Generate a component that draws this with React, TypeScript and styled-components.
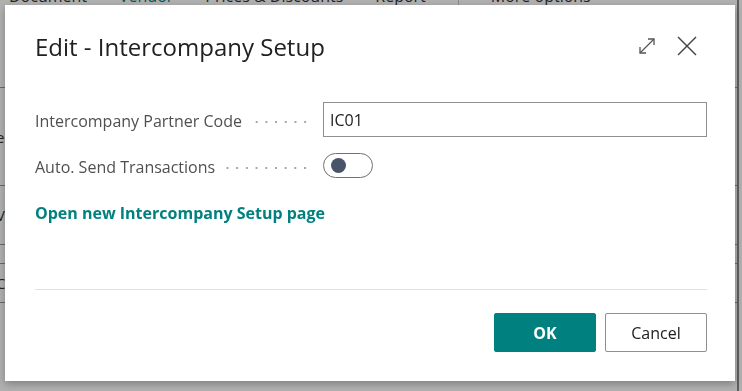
import styled, { createGlobalStyle } from 'styled-components';

const GlobalStyle = createGlobalStyle`
	html, body {
		margin: 0;
		padding: 0;
		width: 742px;
		height: 391px;
		overflow: hidden;
		background: #fff;
		font-family: 'Open Sans', 'Noto Sans', sans-serif;
	}
`;

// page behind the dialog (mostly hidden)
const Page = styled.div`
	width: 739px;
	height: 391px;
	display: flex;
	flex-direction: column;
	border-right: 2px solid #8a8a8a;
	box-sizing: border-box;
`;

const ActionBar = styled.div`
	display: flex;
	align-items: center;
	gap: 32px;
	height: 24px;
	margin-top: -16px;
	padding-left: 9px;
	font-size: 16px;
	white-space: nowrap;
`;

const ActionItem = styled.span<{ $accent?: boolean }>`
	color: ${(p) => (p.$accent ? '#00807f' : '#333')};
`;

const ActionSep = styled.span`
	width: 1px;
	height: 22px;
	background: #c8c8c8;
`;

const BgRow = styled.div<{ $h: number }>`
	height: ${(p) => p.$h}px;
	border-bottom: 1px solid #999;
	display: flex;
	align-items: center;
	font-size: 15px;
	color: #333;
	margin-left: -4px;
`;

const Overlay = styled.div`
	position: fixed;
	inset: 0;
	background: rgba(0, 0, 0, 0.31);
	display: flex;
	align-items: flex-start;
	padding: 5px 0 0 5px;
`;

const Dialog = styled.div`
	width: 730px;
	height: 376px;
	background: #fff;
	box-shadow: 0 3px 8px rgba(0, 0, 0, 0.28);
	display: flex;
	flex-direction: column;
	padding: 0 28px 0 30px;
	box-sizing: border-box;
`;

const Header = styled.div`
	display: flex;
	align-items: center;
	justify-content: space-between;
	padding-top: 26px;
`;

const Title = styled.h1`
	margin: 0;
	font-size: 24px;
	line-height: 32px;
	font-weight: 400;
	color: #212121;
`;

const HeaderIcons = styled.div`
	display: flex;
	align-items: center;
	gap: 20px;
	margin-right: 10px;
	margin-top: -2px;
`;

const IconButton = styled.button`
	border: none;
	background: transparent;
	padding: 0;
	width: 20px;
	height: 20px;
	display: flex;
	align-items: center;
	justify-content: center;
	cursor: pointer;
`;

const Body = styled.div`
	flex: 1;
	display: flex;
	flex-direction: column;
	padding-top: 39px;
`;

const FieldRow = styled.div`
	display: grid;
	grid-template-columns: 288px 1fr;
	height: 35px;
	align-items: center;
	margin-bottom: 11px;
`;

const LabelCell = styled.div`
	display: flex;
	align-items: center;
	padding-right: 13px;
	padding-top: 2px;
`;

const Label = styled.span`
	font-size: 16px;
	color: #505050;
	white-space: nowrap;
`;

const Leader = styled.span`
	flex: 1;
	height: 4px;
	margin-left: 8px;
	margin-top: 3px;
	background-image: radial-gradient(circle, #a6a6a6 0.9px, transparent 1.2px);
	background-size: 9.7px 4px;
	background-position: right center;
	background-repeat: repeat-x;
`;

const TextInput = styled.input`
	height: 35px;
	box-sizing: border-box;
	border: 1px solid #8f8f8f;
	border-radius: 0;
	padding: 0 6px;
	font-family: inherit;
	font-size: 16px;
	color: #212121;
	outline: none;
`;

const Toggle = styled.button<{ $on: boolean }>`
	width: 50px;
	height: 25px;
	box-sizing: border-box;
	border: 1px solid #717171;
	border-radius: 13px;
	background: #fff;
	padding: 0 5px;
	display: flex;
	align-items: center;
	justify-content: ${(p) => (p.$on ? 'flex-end' : 'flex-start')};
	cursor: pointer;
`;

const Knob = styled.span`
	width: 15px;
	height: 15px;
	border-radius: 50%;
	background: #4a5468;
	margin-left: 2px;
`;

const Link = styled.a`
	font-size: 16px;
	line-height: 24px;
	font-weight: 700;
	color: #00807f;
	text-decoration: none;
	margin-top: 7px;
	cursor: pointer;
`;

const Divider = styled.div`
	height: 1px;
	background: #e1e1e1;
`;

const Footer = styled.div`
	display: flex;
	justify-content: flex-end;
	gap: 9px;
	padding: 23px 0 29px;
`;

const Button = styled.button<{ $primary?: boolean }>`
	min-width: 102px;
	height: 39px;
	box-sizing: border-box;
	border-radius: 2px;
	border: 1px solid ${(p) => (p.$primary ? '#00807f' : '#8f8f8f')};
	background: ${(p) => (p.$primary ? '#00807f' : '#fff')};
	color: ${(p) => (p.$primary ? '#fff' : '#212121')};
	font-family: inherit;
	font-size: 16px;
	font-weight: ${(p) => (p.$primary ? 700 : 400)};
	cursor: pointer;
`;

const ExpandIcon = () => (
	<svg width="20" height="20" viewBox="0 0 20 20" fill="none" stroke="#555" strokeWidth="1.3">
		<path d="M3 17L17 3" />
		<path d="M11 3H17V9" />
		<path d="M3 11V17H9" />
	</svg>
);

const CloseIcon = () => (
	<svg width="20" height="20" viewBox="0 0 20 20" fill="none" stroke="#444" strokeWidth="1.5">
		<path d="M1 1L19 19" />
		<path d="M19 1L1 19" />
	</svg>
);

export default function App() {
	return (
		<>
			<GlobalStyle />
			<Page>
				<ActionBar>
					<ActionItem>Document</ActionItem>
					<ActionItem $accent>Vendor</ActionItem>
					<ActionItem>Prices &amp; Discounts</ActionItem>
					<ActionItem>Report</ActionItem>
					<ActionSep />
					<ActionItem>More options</ActionItem>
				</ActionBar>
				<BgRow $h={79}>&nbsp;</BgRow>
				<BgRow $h={97}>e</BgRow>
				<BgRow $h={58}>V</BgRow>
				<BgRow $h={18}>&nbsp;</BgRow>
				<BgRow $h={38}>C</BgRow>
			</Page>
			<Overlay>
				<Dialog>
					<Header>
						<Title>Edit - Intercompany Setup</Title>
						<HeaderIcons>
							<IconButton aria-label="Expand">
								<ExpandIcon />
							</IconButton>
							<IconButton aria-label="Close">
								<CloseIcon />
							</IconButton>
						</HeaderIcons>
					</Header>
					<Body>
						<FieldRow>
							<LabelCell>
								<Label>Intercompany Partner Code</Label>
								<Leader />
							</LabelCell>
							<TextInput defaultValue="IC01" />
						</FieldRow>
						<FieldRow>
							<LabelCell>
								<Label>Auto. Send Transactions</Label>
								<Leader />
							</LabelCell>
							<Toggle $on={false} aria-label="Auto. Send Transactions">
								<Knob />
							</Toggle>
						</FieldRow>
						<Link>Open new Intercompany Setup page</Link>
					</Body>
					<Divider />
					<Footer>
						<Button $primary>OK</Button>
						<Button>Cancel</Button>
					</Footer>
				</Dialog>
			</Overlay>
		</>
	);
}
